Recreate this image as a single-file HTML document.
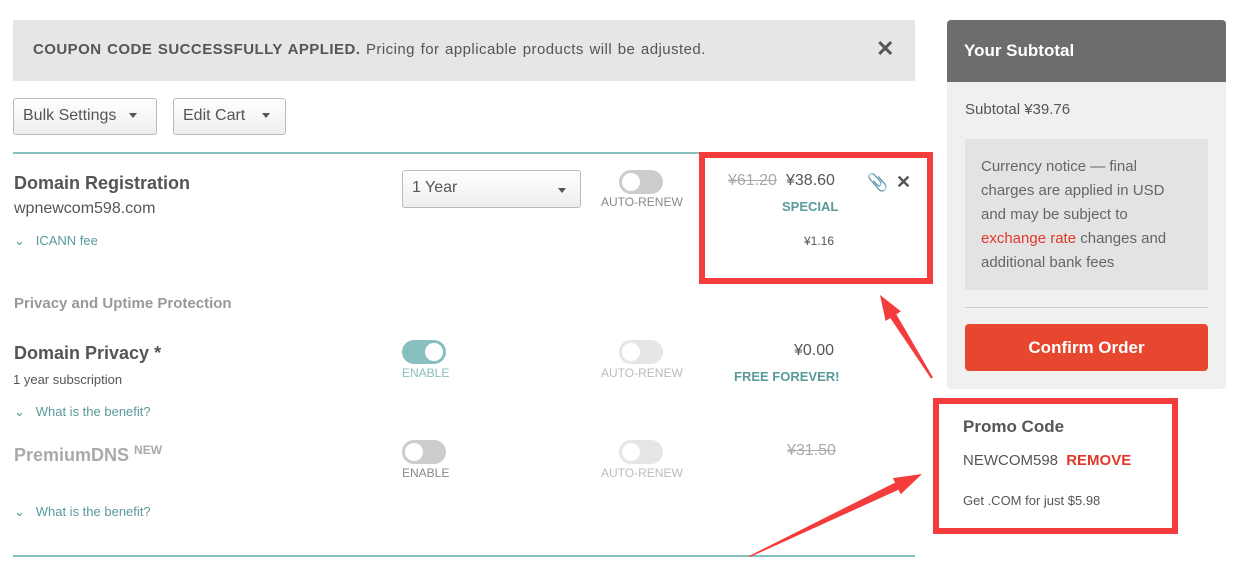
<!DOCTYPE html>
<html><head><meta charset="utf-8"><style>
*{box-sizing:border-box;margin:0;padding:0}
body{width:1242px;height:572px;background:#fff;font-family:"Liberation Sans",sans-serif;color:#555;position:relative;overflow:hidden}
.a{position:absolute}
.tog{position:absolute;width:44px;height:24px;border-radius:12px;background:#ccc}
.tog::after{content:"";position:absolute;left:3px;top:3px;width:18px;height:18px;border-radius:50%;background:#fff}
.tog.on{background:#88c0bf}.tog.on::after{left:23px}
.tog.lt{background:#e6e6e6}
.lbl{position:absolute;font-size:12px;color:#888}
.teal{color:#5a9a9a}
.btn{position:absolute;border:1px solid #bbb;border-radius:3px;background:linear-gradient(#fff,#eee);font-size:16px;padding:8px 9px;color:#555}
.caret{display:inline-block;border-left:4px solid transparent;border-right:4px solid transparent;border-top:5px solid #555;vertical-align:middle}
</style></head><body>
<div class="a" style="left:13px;top:20px;width:902px;height:61px;background:#e6e6e6"></div>
<div class="a" style="left:33px;top:41px;font-size:15px;color:#555;letter-spacing:0.45px;word-spacing:1px"><b>COUPON CODE SUCCESSFULLY APPLIED.</b> Pricing for applicable products will be adjusted.</div>
<div class="a" style="left:876px;top:36px;font-size:22px;color:#555;font-weight:bold">✕</div>
<div class="btn" style="left:13px;top:98px;width:144px;height:37px">Bulk Settings <span class="caret" style="margin-left:8px"></span></div>
<div class="btn" style="left:173px;top:98px;width:113px;height:37px">Edit Cart <span class="caret" style="margin-left:12px"></span></div>
<div class="a" style="left:13px;top:152px;width:902px;height:2px;background:#88c0bf"></div>
<div class="a" style="left:14px;top:173px;font-size:18px;font-weight:bold;color:#555">Domain Registration</div>
<div class="a" style="left:14px;top:200px;font-size:16px;color:#555">wpnewcom598.com</div>
<div class="a teal" style="left:14px;top:233px;font-size:13px">⌄&nbsp;&nbsp; ICANN fee</div>
<div class="btn" style="left:402px;top:170px;width:179px;height:38px;font-size:16px">1 Year<span class="caret" style="position:absolute;right:14px;top:17px"></span></div>
<div class="tog" style="left:619px;top:170px"></div>
<div class="lbl" style="left:601px;top:195px">AUTO-RENEW</div>
<div class="a" style="left:728px;top:172px;font-size:16px;color:#aaa;text-decoration:line-through">¥61.20</div>
<div class="a" style="left:786px;top:172px;font-size:16px;color:#555">¥38.60</div>
<div class="a teal" style="left:782px;top:199px;font-size:13px;font-weight:bold">SPECIAL</div>
<div class="a" style="left:804px;top:234px;font-size:12px;color:#555">¥1.16</div>
<div class="a" style="left:867px;top:173px;font-size:17px;color:#555">📎</div>
<div class="a" style="left:896px;top:172px;font-size:18px;color:#555;font-weight:bold">✕</div>
<div class="a" style="left:14px;top:295px;font-size:15px;color:#999;font-weight:bold">Privacy and Uptime Protection</div>
<div class="a" style="left:14px;top:343px;font-size:18px;font-weight:bold;color:#555">Domain Privacy *</div>
<div class="a" style="left:13px;top:372px;font-size:13px;color:#555">1 year subscription</div>
<div class="a teal" style="left:14px;top:404px;font-size:13px">⌄&nbsp;&nbsp; What is the benefit?</div>
<div class="tog on" style="left:402px;top:340px"></div>
<div class="lbl teal" style="left:402px;top:366px;color:#88c0bf">ENABLE</div>
<div class="tog lt" style="left:619px;top:340px"></div>
<div class="lbl" style="left:601px;top:366px;color:#bbb">AUTO-RENEW</div>
<div class="a" style="left:794px;top:342px;font-size:16px;color:#555">¥0.00</div>
<div class="a teal" style="left:734px;top:369px;font-size:13px;font-weight:bold">FREE FOREVER!</div>
<div class="a" style="left:14px;top:443px;font-size:18px;font-weight:bold;color:#aaa">PremiumDNS <sup style="font-size:12px">NEW</sup></div>
<div class="a teal" style="left:14px;top:504px;font-size:13px">⌄&nbsp;&nbsp; What is the benefit?</div>
<div class="tog" style="left:402px;top:440px"></div>
<div class="lbl" style="left:402px;top:466px">ENABLE</div>
<div class="tog lt" style="left:619px;top:440px"></div>
<div class="lbl" style="left:601px;top:466px;color:#bbb">AUTO-RENEW</div>
<div class="a" style="left:787px;top:442px;font-size:16px;color:#aaa;text-decoration:line-through">¥31.50</div>
<div class="a" style="left:13px;top:555px;width:902px;height:2px;background:#88c0bf"></div>
<div class="a" style="left:947px;top:20px;width:279px;height:369px;background:#f0f0f0;border-radius:4px;overflow:hidden">
<div style="height:62px;background:#6d6d6d;color:#fff;font-size:17px;font-weight:bold;padding:21px 17px">Your Subtotal</div></div>
<div class="a" style="left:965px;top:101px;font-size:15px;color:#555">Subtotal ¥39.76</div>
<div class="a" style="left:965px;top:139px;width:243px;height:151px;background:#e3e3e3;padding:16px 16px;font-size:15px;line-height:24px;color:#666">Currency notice — final charges are applied in USD and may be subject to <span style="color:#e0392b">exchange rate</span> changes and additional bank fees</div>
<div class="a" style="left:965px;top:307px;width:243px;height:1px;background:#ccc"></div>
<div class="a" style="left:965px;top:324px;width:243px;height:47px;background:#e6472e;border-radius:4px;color:#fff;font-size:17px;font-weight:bold;text-align:center;line-height:47px">Confirm Order</div>
<div class="a" style="left:963px;top:417px;font-size:17px;font-weight:bold;color:#555">Promo Code</div>
<div class="a" style="left:963px;top:452px;font-size:15px;color:#555">NEWCOM598 <b style="color:#e0392b;margin-left:4px">REMOVE</b></div>
<div class="a" style="left:963px;top:493px;font-size:13px;color:#555">Get .COM for just $5.98</div>
<div class="a" style="left:699px;top:152px;width:234px;height:132px;border:6px solid #f53c3c"></div>
<div class="a" style="left:933px;top:398px;width:245px;height:136px;border:6px solid #f53c3c"></div>
<svg class="a" style="left:0;top:0" width="1242" height="572">
<path d="M933 377.5 L896.3 314.3 L901 311.4 L880 295 L885.6 321 L890.3 318 L931 378.5Z" fill="#f53c3c"/>
<path d="M750 557 L898.5 489.8 L900.7 494.3 L922 474 L892.9 478.1 L895 482.6 L749 556Z" fill="#f53c3c"/>
</svg>
</body></html>
